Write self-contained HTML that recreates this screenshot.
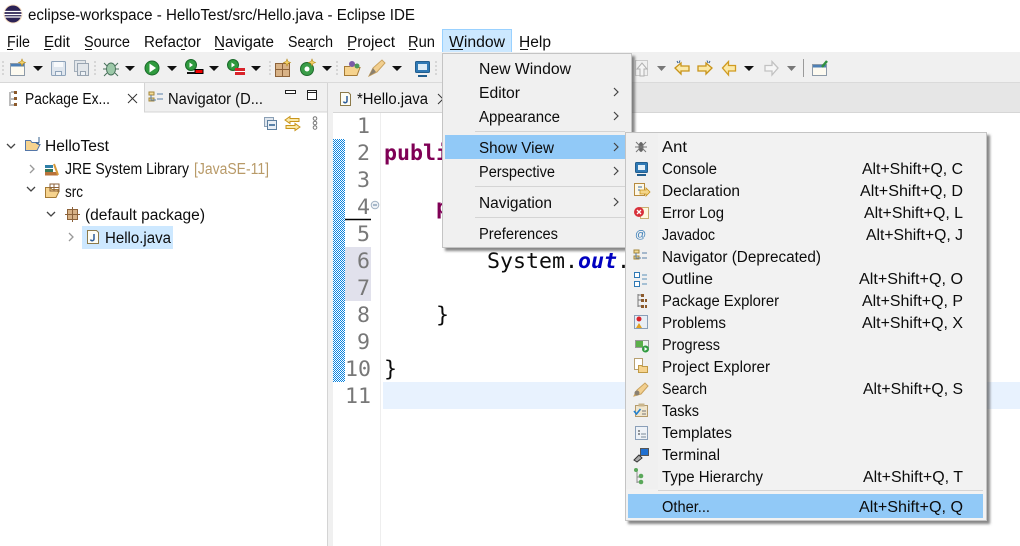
<!DOCTYPE html>
<html><head><meta charset="utf-8"><title>eclipse-workspace</title>
<style>
html,body{margin:0;padding:0;background:#fff;width:1020px;height:546px;overflow:hidden}
svg{display:block}
text{font-family:"Liberation Sans",sans-serif;font-size:15.5px;fill:#0c0c0c;white-space:pre}
.mono{font-family:"DejaVu Sans Mono","Liberation Mono",monospace;font-size:21.6px}
.ln{font-family:"DejaVu Sans Mono","Liberation Mono",monospace;font-size:21.6px;fill:#787878}
</style></head><body>
<svg width="1020" height="546" viewBox="0 0 1020 546" xmlns="http://www.w3.org/2000/svg">
<defs>
<pattern id="dith" width="2" height="2" patternUnits="userSpaceOnUse"><rect width="2" height="2" fill="#fff"/><rect width="1" height="1" fill="#0a84e0"/><rect x="1" y="1" width="1" height="1" fill="#0a84e0"/></pattern>
<filter id="sh" x="-5%" y="-5%" width="110%" height="110%"><feDropShadow dx="3" dy="3" stdDeviation="1.2" flood-color="#555" flood-opacity=".7"/></filter>
</defs>
<rect width="1020" height="546" fill="#fff"/>
<!-- title -->
<circle cx="13" cy="14" r="9.500" fill="#f3c99a" opacity=".6"/>
<circle cx="13" cy="14" r="8.500" fill="#2c2255"/><path d="M4 11.500h18M4 14.500h18M5 17h16" stroke="#fff" stroke-width="1.200"/>
<text x="28" y="20" textLength="387" lengthAdjust="spacingAndGlyphs">eclipse-workspace - HelloTest/src/Hello.java - Eclipse IDE</text>
<!-- menu -->
<rect x="442.500" y="29.500" width="69" height="23" fill="#cce8ff" stroke="#99d1ff"/>
<g>
<text x="7" y="47" textLength="23" lengthAdjust="spacingAndGlyphs">File</text>
<text x="44" y="47" textLength="26" lengthAdjust="spacingAndGlyphs">Edit</text>
<text x="84" y="47" textLength="46" lengthAdjust="spacingAndGlyphs">Source</text>
<text x="144" y="47" textLength="57" lengthAdjust="spacingAndGlyphs">Refactor</text>
<text x="214" y="47" textLength="60" lengthAdjust="spacingAndGlyphs">Navigate</text>
<text x="288" y="47" textLength="45" lengthAdjust="spacingAndGlyphs">Search</text>
<text x="347" y="47" textLength="48" lengthAdjust="spacingAndGlyphs">Project</text>
<text x="408" y="47" textLength="27" lengthAdjust="spacingAndGlyphs">Run</text>
<text x="449" y="47" textLength="56" lengthAdjust="spacingAndGlyphs">Window</text>
<text x="519" y="47" textLength="32" lengthAdjust="spacingAndGlyphs">Help</text>
</g>
<path d="M7 49.500h6M44 49.500h7M85 49.500h7M181 49.500h4M215 49.500h9M309 49.500h6M348 49.500h7M409 49.500h7M450 49.500h13M520 49.500h8" stroke="#111" stroke-width="1"/>
<!-- toolbar -->
<rect y="52" width="1020" height="31" fill="#f0f0f0"/>
<path d="M0 82.500H1020" stroke="#dadada"/>
<path d="M3 61v16M95 61v16M270 61v16M337 61v16M436 61v16" stroke="#bbb" stroke-dasharray="2 2"/>
<path d="M803.500 59v18" stroke="#9a9a9a"/>
<!-- toolbar icons -->
<g id="tb">
<rect x="10.500" y="63.500" width="14" height="12" fill="#fdfaf0" stroke="#8d9aa8"/><rect x="11" y="64" width="13" height="2.500" fill="#4d7fb5"/><path d="M22 59l1 2.500 2.500 1-2.500 1-1 2.500-1-2.500-2.500-1 2.500-1z" fill="#f4d36a" stroke="#b78b1e" stroke-width=".6"/>
<rect x="51.500" y="61.500" width="14" height="14" rx="1" fill="#dfe6ee" stroke="#8ea3ba"/><rect x="54" y="62" width="9" height="5" fill="#f7f9fb"/><rect x="55.500" y="71.500" width="6" height="4" fill="#eef2f6" stroke="#8ea3ba"/>
<rect x="74.500" y="60.500" width="11" height="11" fill="#e2e6ea" stroke="#a5b0bb"/><rect x="77.500" y="63.500" width="11" height="12" fill="#e2e6ea" stroke="#98a4b1"/><rect x="80.500" y="71.500" width="5" height="4" fill="#eef2f6" stroke="#98a4b1"/>
<ellipse cx="111" cy="69" rx="4.500" ry="6" fill="#9cc8a8" stroke="#47705a"/><path d="M104 63l3 3M118 63l-3 3M103 69h4M119 69h-4M104 76l3-3M118 76l-3-3" stroke="#47705a"/>
<circle cx="152" cy="68" r="7" fill="#2f9a3e" stroke="#1a6a2a"/><path d="M149.500 63.500v9l6.500-4.500z" fill="#fff"/>
<circle cx="191" cy="65" r="5.500" fill="#2f9a3e" stroke="#1a6a2a"/><path d="M189.500 62.500v5l3.500-2.500z" fill="#fff"/><rect x="195" y="69.500" width="8" height="4" fill="#e00" stroke="#000"/><rect x="187" y="72" width="8" height="2" fill="#111"/>
<circle cx="233" cy="65" r="5.500" fill="#2f9a3e" stroke="#1a6a2a"/><path d="M231.500 62.500v5l3.500-2.500z" fill="#fff"/><rect x="235" y="68" width="10" height="7" fill="#d8232a"/><path d="M235 71.500h10" stroke="#fff"/>
<rect x="275.500" y="63.500" width="14" height="13" fill="#d8b286" stroke="#8c6239"/><path d="M282.500 63v13M275 69.500h14" stroke="#8c6239"/><path d="M287 59l1 2.500 2.500 1-2.500 1-1 2.500-1-2.500-2.500-1 2.500-1z" fill="#f4d36a" stroke="#b78b1e" stroke-width=".6"/>
<circle cx="307" cy="69" r="6.500" fill="#3a9d48" stroke="#1f6a2c"/><circle cx="307" cy="69" r="2.500" fill="#fff"/><path d="M312 59l1 2.500 2.500 1-2.500 1-1 2.500-1-2.500-2.500-1 2.500-1z" fill="#f4d36a" stroke="#b78b1e" stroke-width=".6"/>
<path d="M344.500 75.500v-9h5l1.500-2h7v3h2l-3 8z" fill="#f6d38e" stroke="#a57a35"/><circle cx="352" cy="64" r="3" fill="#7a5aa6"/><circle cx="357" cy="66" r="2.500" fill="#4e9a57"/>
<path d="M369 76l4-8 9-8 3 3-8 9z" fill="#f2cf8f" stroke="#c9a25e"/><path d="M369 76l4-8 3 4z" fill="#8a8070"/>
<rect x="415.500" y="61.500" width="14" height="11" rx="1" fill="#2f79b5" stroke="#225e8e"/><rect x="418" y="64" width="9" height="6" fill="#dcecf7"/><path d="M418 76h9" stroke="#225e8e" stroke-width="2"/>
<rect x="635.500" y="60.500" width="12" height="15" fill="#f0f0f0" stroke="#c9c9c9"/><path d="M640 76v-7h-3l5-6 5 6h-3v7z" fill="#f4f4f4" stroke="#b0b0b0"/>
<path d="M675 68l6-5v3h8v5h-8v3z" fill="#fbe9a8" stroke="#c8941a" stroke-width="1.300"/><path d="M677 61l1 2M680 60.500l-1 2.500" stroke="#36608f"/>
<path d="M712 68l-6-5v3h-8v5h8v3z" fill="#fbe9a8" stroke="#c8941a" stroke-width="1.300"/><path d="M710 61l-1 2M707 60.500l1 2.500" stroke="#36608f"/>
<path d="M722.500 68l6-6.500v4h7v5.500h-7v4z" fill="#fbe9a8" stroke="#d09b20" stroke-width="1.300"/>
<path d="M778 68l-6-6.500v4h-7v5.500h7v4z" fill="#f6f6f6" stroke="#c2c2c2" stroke-width="1.300"/>
<rect x="812.500" y="64.500" width="14" height="11" fill="#fdfaf0" stroke="#8d9aa8"/><rect x="813" y="65" width="13" height="2.500" fill="#4d7fb5"/><path d="M822 67l5-6" stroke="#2f8f3e" stroke-width="2.500"/>
</g>
<path d="M33 66h10l-5 5zM125 66h10l-5 5zM167 66h10l-5 5zM209 66h10l-5 5zM251 66h10l-5 5zM322 66h10l-5 5zM392 66h10l-5 5zM744 66h10l-5 5z" fill="#111"/>
<path d="M657 66h9l-4.500 5zM787 66h9l-4.500 5z" fill="#777"/>
<!-- main bands -->
<rect y="83" width="1020" height="463" fill="#f0f0f0"/>
<rect x="333" y="83" width="687" height="29" fill="#e6e6e6"/>
<path d="M333 112.500H1020" stroke="#d6d6d6"/>
<!-- left pane -->
<rect x="0" y="112" width="327" height="434" fill="#fff"/>
<rect x="0" y="83" width="144" height="29" fill="#fff"/>
<rect x="144" y="83" width="183" height="29" fill="#f0f0f0"/>
<path d="M144.500 83v29H327M327.500 83V546" stroke="#d4d4d4" fill="none"/>
<path d="M0 82.500H327" stroke="#d8d8d8"/>
<path d="M10 92v14M11 92h4M11 99h4M11 105h4" stroke="#777" fill="none"/><rect x="14" y="91" width="3" height="3" fill="#8c5a2b"/><rect x="14" y="97" width="3" height="3" fill="#8c5a2b"/><rect x="14" y="103" width="3" height="3" fill="#8c5a2b"/>
<text x="25" y="104" textLength="85" lengthAdjust="spacingAndGlyphs">Package Ex...</text>
<path d="M128 94l9 9M137 94l-9 9" stroke="#333" stroke-width="1"/>
<path d="M149 92h5v3h-5zM149 98h5v3h-5z" fill="#f3dc9a" stroke="#a58638"/><path d="M151 95v5h5M157 99h6M157 94h6" stroke="#5a7fa8" fill="none"/>
<text x="168" y="104" textLength="95" lengthAdjust="spacingAndGlyphs">Navigator (D...</text>
<rect x="285.500" y="90.500" width="10" height="3" fill="#fff" stroke="#222"/>
<rect x="307.500" y="90.500" width="9" height="9" fill="#fff" stroke="#222"/><path d="M307 92.500h10" stroke="#222"/>
<rect x="264.500" y="117.500" width="9" height="9" fill="#dfe6ee" stroke="#8ba0b5"/><rect x="267.500" y="120.500" width="9" height="9" fill="#e9eff5" stroke="#5d7f9f"/><path d="M269 125h6" stroke="#2a5d8e" stroke-width="1.500"/>
<path d="M285 120l5-3.500v2h9v3h-9v2zM300 127l-5-3.500v2h-9v3h9v2z" fill="#fbe9a8" stroke="#c8941a"/>
<circle cx="315" cy="118.500" r="1.800" fill="#fff" stroke="#777"/><circle cx="315" cy="123" r="1.800" fill="#fff" stroke="#777"/><circle cx="315" cy="127.500" r="1.800" fill="#fff" stroke="#777"/>
<!-- tree -->
<rect x="82" y="226" width="91" height="23" fill="#cde8ff"/>
<path d="M7 144l4 4 4-4M27 187l4 4 4-4M47 212l4 4 4-4" stroke="#444" stroke-width="1.300" fill="none"/>
<path d="M30 165l4 4-4 4M69 233l4 4-4 4" stroke="#999" stroke-width="1.300" fill="none"/>
<path d="M25.500 150.500v-10h5l1.500 2h6v2h2l-3 6z" fill="#f6d38e" stroke="#5577a8"/><path d="M39 137v5a1.500 1.500 0 0 1-3 0" stroke="#36608f" fill="none"/>
<text x="45" y="151" textLength="64" lengthAdjust="spacingAndGlyphs">HelloTest</text>
<rect x="45" y="169" width="8" height="3" fill="#3a7a5a"/><rect x="45" y="165" width="8" height="3" fill="#2f7fa8"/><rect x="45" y="172" width="13" height="3.500" fill="#b9723a"/><path d="M54 164l4 11" stroke="#d89a3a" stroke-width="2"/>
<text x="65" y="174" textLength="124" lengthAdjust="spacingAndGlyphs">JRE System Library</text>
<text x="194" y="174" textLength="75" lengthAdjust="spacingAndGlyphs" style="fill:#b89a68">[JavaSE-11]</text>
<path d="M45.500 197.500v-10h5l1.500 2h6v2h1l-3 6z" fill="#f6d38e" stroke="#a57a35"/><path d="M50 184h9v7h-9zM54 184v7M50 187.500h9" stroke="#8c6239" fill="none"/>
<text x="65" y="197" textLength="18" lengthAdjust="spacingAndGlyphs">src</text>
<rect x="67.500" y="209.500" width="10" height="10" fill="#d8b286" stroke="#8c6239"/><path d="M72.500 207v15M65 214.500h15" stroke="#8c6239"/>
<text x="85" y="220" textLength="120" lengthAdjust="spacingAndGlyphs">(default package)</text>
<path d="M87.500 230.500h9l2 2v11h-11z" fill="#fdfdf6" stroke="#8c7a4a"/><path d="M94 234v5a1.800 1.800 0 0 1-3.500 .5" stroke="#2c5c9a" stroke-width="1.500" fill="none"/>
<text x="105" y="243" textLength="66" lengthAdjust="spacingAndGlyphs">Hello.java</text>
<!-- editor tab -->
<rect x="333" y="83" width="110" height="29" fill="#f0f0f0"/>
<path d="M340.500 92.500h8l2 2v11h-10z" fill="#fdfdf6" stroke="#8c7a4a"/><path d="M347 96v5a1.800 1.800 0 0 1-3.500 .5" stroke="#2c5c9a" stroke-width="1.500" fill="none"/>
<text x="357" y="104" textLength="71" lengthAdjust="spacingAndGlyphs">*Hello.java</text>
<path d="M438 94l5 5-5 5" stroke="#333" fill="none"/>
<!-- editor -->
<rect x="333" y="113" width="687" height="433" fill="#fff"/>
<rect x="333" y="139" width="12" height="243" fill="url(#dith)"/>
<rect x="345" y="247" width="26" height="54" fill="#e1e1ec"/>
<path d="M345 219.500h26" stroke="#000" stroke-width="1.400"/>
<path d="M380.500 113V546" stroke="#eee"/>
<rect x="383" y="382" width="637" height="27" fill="#e8f2fe"/>
<circle cx="375" cy="205" r="3.800" fill="#eef1f5" stroke="#9fb0c2"/><path d="M373 205h4" stroke="#5f7f9f"/>
<g>
<text class="ln" x="357" y="133">1</text><text class="ln" x="357" y="160">2</text><text class="ln" x="357" y="187">3</text><text class="ln" x="357" y="214">4</text><text class="ln" x="357" y="241">5</text><text class="ln" x="357" y="268">6</text><text class="ln" x="357" y="295">7</text><text class="ln" x="357" y="322">8</text><text class="ln" x="357" y="349">9</text><text class="ln" x="345" y="376">10</text><text class="ln" x="345" y="403">11</text>
</g>
<text class="mono" x="384" y="160" style="font-weight:bold;fill:#7f0055">public</text>
<text class="mono" x="436" y="214" style="font-weight:bold;fill:#7f0055">public</text>
<text class="mono" x="487" y="268">System.<tspan style="fill:#0000c0;font-style:italic;font-weight:bold">out</tspan>.</text>
<text class="mono" x="436" y="322">}</text>
<text class="mono" x="384" y="376">}</text>
<!-- menu 1 -->
<g filter="url(#sh)"><rect x="442.500" y="53.500" width="189" height="194" fill="#f0f0f0" stroke="#c4c4c4"/></g>
<rect x="445" y="135" width="181" height="24" fill="#91c9f7"/>
<path d="M475 131.500H625M475 186.500H625M475 217.500H625" stroke="#d4d4d4"/>
<g>
<text x="479" y="74" textLength="92" lengthAdjust="spacingAndGlyphs">New Window</text>
<text x="479" y="98" textLength="41" lengthAdjust="spacingAndGlyphs">Editor</text>
<text x="479" y="122" textLength="81" lengthAdjust="spacingAndGlyphs">Appearance</text>
<text x="479" y="153" textLength="75" lengthAdjust="spacingAndGlyphs">Show View</text>
<text x="479" y="177" textLength="76" lengthAdjust="spacingAndGlyphs">Perspective</text>
<text x="479" y="208" textLength="73" lengthAdjust="spacingAndGlyphs">Navigation</text>
<text x="479" y="239" textLength="79" lengthAdjust="spacingAndGlyphs">Preferences</text>
</g>
<path d="M614 88l4 4-4 4M614 112l4 4-4 4M614 143l4 4-4 4M614 167l4 4-4 4M614 198l4 4-4 4" stroke="#444" stroke-width="1.200" fill="none"/>
<!-- menu 2 -->
<g filter="url(#sh)"><rect x="625.500" y="132.500" width="361" height="388" fill="#f2f2f2" stroke="#c4c4c4"/></g>
<rect x="626" y="133" width="32" height="356" fill="#f0f0f0"/>
<path d="M658 490.500H983" stroke="#d4d4d4"/>
<rect x="628" y="494" width="355" height="24" fill="#91c9f7"/>
<g>
<text x="662" y="152" textLength="25" lengthAdjust="spacingAndGlyphs">Ant</text>
<text x="662" y="174" textLength="55" lengthAdjust="spacingAndGlyphs">Console</text>
<text x="662" y="196" textLength="78" lengthAdjust="spacingAndGlyphs">Declaration</text>
<text x="662" y="218" textLength="62" lengthAdjust="spacingAndGlyphs">Error Log</text>
<text x="662" y="240" textLength="53" lengthAdjust="spacingAndGlyphs">Javadoc</text>
<text x="662" y="262" textLength="159" lengthAdjust="spacingAndGlyphs">Navigator (Deprecated)</text>
<text x="662" y="284" textLength="51" lengthAdjust="spacingAndGlyphs">Outline</text>
<text x="662" y="306" textLength="117" lengthAdjust="spacingAndGlyphs">Package Explorer</text>
<text x="662" y="328" textLength="64" lengthAdjust="spacingAndGlyphs">Problems</text>
<text x="662" y="350" textLength="58" lengthAdjust="spacingAndGlyphs">Progress</text>
<text x="662" y="372" textLength="108" lengthAdjust="spacingAndGlyphs">Project Explorer</text>
<text x="662" y="394" textLength="45" lengthAdjust="spacingAndGlyphs">Search</text>
<text x="662" y="416" textLength="37" lengthAdjust="spacingAndGlyphs">Tasks</text>
<text x="662" y="438" textLength="70" lengthAdjust="spacingAndGlyphs">Templates</text>
<text x="662" y="460" textLength="58" lengthAdjust="spacingAndGlyphs">Terminal</text>
<text x="662" y="482" textLength="101" lengthAdjust="spacingAndGlyphs">Type Hierarchy</text>
<text x="662" y="512" textLength="48" lengthAdjust="spacingAndGlyphs">Other...</text>
<text x="862" y="174" textLength="101" lengthAdjust="spacingAndGlyphs">Alt+Shift+Q, C</text>
<text x="860" y="196" textLength="103" lengthAdjust="spacingAndGlyphs">Alt+Shift+Q, D</text>
<text x="864" y="218" textLength="99" lengthAdjust="spacingAndGlyphs">Alt+Shift+Q, L</text>
<text x="866" y="240" textLength="97" lengthAdjust="spacingAndGlyphs">Alt+Shift+Q, J</text>
<text x="859" y="284" textLength="104" lengthAdjust="spacingAndGlyphs">Alt+Shift+Q, O</text>
<text x="862" y="306" textLength="101" lengthAdjust="spacingAndGlyphs">Alt+Shift+Q, P</text>
<text x="862" y="328" textLength="101" lengthAdjust="spacingAndGlyphs">Alt+Shift+Q, X</text>
<text x="863" y="394" textLength="100" lengthAdjust="spacingAndGlyphs">Alt+Shift+Q, S</text>
<text x="863" y="482" textLength="100" lengthAdjust="spacingAndGlyphs">Alt+Shift+Q, T</text>
<text x="859" y="512" textLength="104" lengthAdjust="spacingAndGlyphs">Alt+Shift+Q, Q</text>
</g>
<!-- submenu icons -->
<g>
<ellipse cx="641" cy="147" rx="2.500" ry="5" fill="#666"/><path d="M636 142l10 10M646 142l-10 10M635 147h12" stroke="#777"/>
<rect x="635.500" y="162.500" width="12" height="10" rx="1" fill="#2f79b5" stroke="#225e8e"/><rect x="638" y="165" width="7" height="5" fill="#e4f0f8"/><path d="M637 175h9" stroke="#225e8e" stroke-width="2"/>
<rect x="634.500" y="183.500" width="10" height="12" fill="#fdf8e8" stroke="#b78b3e"/><path d="M640 190h6v-2l4 4-4 4v-2h-6z" fill="#f4d68a" stroke="#c8941a" stroke-width=".8"/><path d="M638 187h4M638 190h2" stroke="#3a6fa8"/>
<rect x="640.500" y="207.500" width="8" height="11" fill="#fdf8e0" stroke="#c9b070"/><circle cx="639" cy="212" r="5" fill="#d8303a"/><path d="M637 210l4 4M641 210l-4 4" stroke="#fff" stroke-width="1.300"/>
<text x="635" y="238" style="font-size:11px;fill:#3c7fb8">@</text>
<path d="M634 250h5v3h-5zM634 256h5v3h-5z" fill="#f3dc9a" stroke="#a58638"/><path d="M636 253v5h5M642 258h5M642 253h5" stroke="#5a7fa8" fill="none"/>
<path d="M634.500 272.500h5v5h-5zM634.500 281.500h5v5h-5z" fill="#fff" stroke="#2f79b5"/><path d="M642 275h5M642 279h5M642 284h5" stroke="#5a8fb8"/>
<path d="M638 294v13M638 295h3M638 300h3M638 306h3" stroke="#777" fill="none"/><rect x="641" y="294" width="3" height="3" fill="#8c5a2b"/><rect x="641" y="299" width="3" height="3" fill="#8c5a2b"/><rect x="641" y="305" width="3" height="3" fill="#8c5a2b"/><rect x="645" y="299" width="2" height="3" fill="#8c5a2b"/><rect x="645" y="305" width="2" height="3" fill="#8c5a2b"/>
<rect x="634.500" y="315.500" width="13" height="13" fill="#e8eef5" stroke="#8a9fb8"/><circle cx="639" cy="319" r="2.500" fill="#d8232a"/><path d="M636 328l3-5 3 5z" fill="#e0a020"/>
<rect x="635.500" y="340.500" width="13" height="7" fill="#eef3ee" stroke="#999"/><rect x="636" y="341" width="7" height="6" fill="#5bb04a"/><circle cx="645.500" cy="349" r="3.500" fill="#2f9a3e"/><path d="M644.500 347v4l3-2z" fill="#fff"/>
<rect x="634.500" y="358.500" width="8" height="11" fill="#fff" stroke="#b8a070"/><path d="M638.500 372.500v-7h3l1 1h5v6z" fill="#f6d38e" stroke="#c09a45"/>
<path d="M634 396l3-6 8-7 3 3-7 8z" fill="#f2cf8f" stroke="#c9a25e"/><circle cx="637" cy="393" r="2.500" fill="#8a8070"/>
<rect x="635.500" y="405.500" width="12" height="11" fill="#f0e5cc" stroke="#b49a6a"/><rect x="638.500" y="403.500" width="6" height="3" fill="#c9b48a"/><path d="M634 411l2.500 3 4-5" stroke="#1f7fd0" stroke-width="1.600" fill="none"/><path d="M642 411h4M642 414h4" stroke="#777"/>
<rect x="635.500" y="426.500" width="12" height="13" fill="#eef2f7" stroke="#8a9fb8"/><path d="M638 431h2M638 434h2" stroke="#333"/><path d="M641 434h5M641 437h5" stroke="#7a8a9a"/>
<rect x="640.500" y="448.500" width="8" height="7" fill="#1f6fd0" stroke="#555"/><path d="M634 460l5-5 3 3-5 4z" fill="#aaa" stroke="#333"/>
<path d="M637 471v12M637 477h4M637 482h4" stroke="#8a8a8a" fill="none"/><circle cx="636" cy="470" r="2" fill="#5aa85a"/><circle cx="641" cy="476" r="2.300" fill="#5aa85a"/><circle cx="641" cy="482" r="2.300" fill="#5aa85a"/>
</g>
</svg>
</body></html>
